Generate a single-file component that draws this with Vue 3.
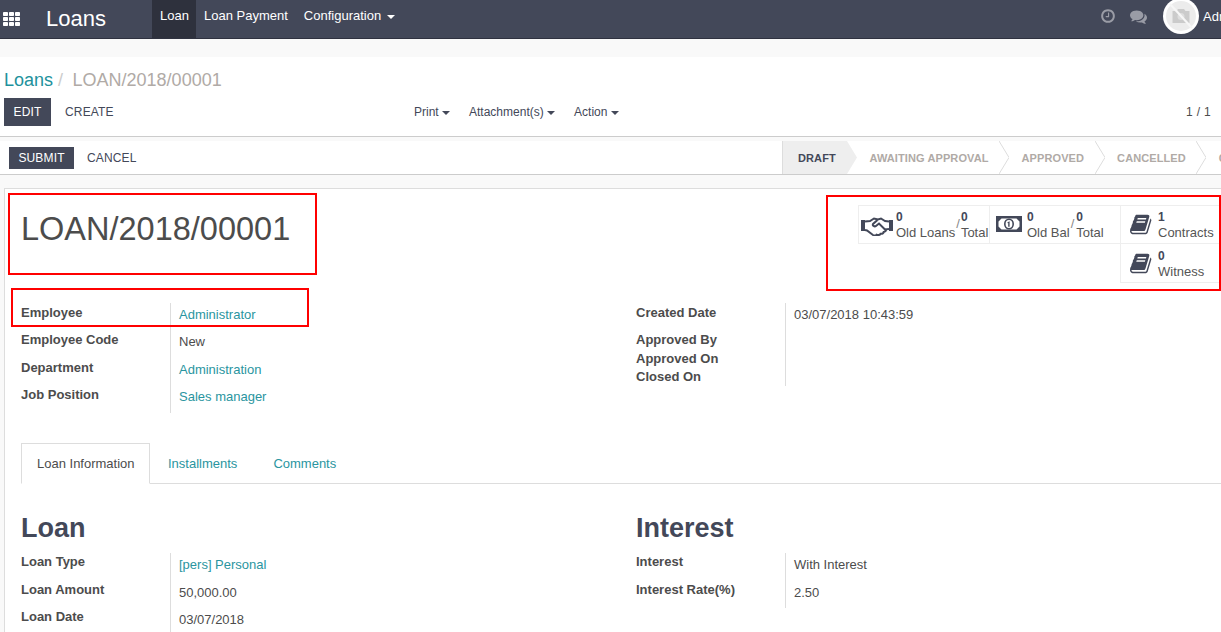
<template>
  <div class="page">
    <header class="navbar">
      <svg class="apps" viewBox="0 0 17 14" width="17" height="14">
        <g fill="#fff">
          <template v-for="row in 3" :key="row">
            <rect v-for="col in 3" :key="col" :x="(col - 1) * 6" :y="(row - 1) * 5" width="5" height="4" rx="0.8" />
          </template>
        </g>
      </svg>
      <div class="brand">Loans</div>
      <nav class="menu">
        <a class="active">Loan</a>
        <a>Loan Payment</a>
        <a>Configuration <span class="caret white"></span></a>
      </nav>
      <div class="systray">
        <svg class="tray-icon" viewBox="0 0 1792 1792" width="16" height="16"><path d="M1024 544v448q0 14-9 23t-23 9h-320q-14 0-23-9t-9-23v-64q0-14 9-23t23-9h224v-352q0-14 9-23t23-9h64q14 0 23 9t9 23zm416 352q0-148-73-273t-198-198-273-73-273 73-198 198-73 273 73 273 198 198 273 73 273-73 198-198 73-273zm224 0q0 209-103 385.500t-279.500 279.500-385.500 103-385.500-103-279.500-279.500-103-385.500 103-385.500 279.500-279.500 385.500-103 385.500 103 279.500 279.500 103 385.500z"/></svg>
        <svg class="tray-icon chat" viewBox="0 0 1792 1792" width="17" height="17"><path d="M1408 768q0 139-94 257t-256.500 186.500-353.500 68.500q-86 0-176-16-124 88-278 128-36 9-86 16h-3q-11 0-20.500-8t-11.500-21q-1-3-1-6.500t.5-6.500 2-6l2.500-5 3.500-5.500 4-5 4.500-5 4-4.500q5-6 23-25t26-29.500 22.500-29 25-38.500 20.500-44q-124-72-195-177t-71-224q0-139 94-257t256.500-186.500 353.500-68.500 353.500 68.500 256.500 186.500 94 257zm384 256q0 120-71 224.500t-195 176.500q10 24 20.500 44t25 38.500 22.500 29 26 29.500 23 25q1 1 4 4.500t4.500 5 4 5 3.500 5.500l2.500 5 2 6 .5 6.500-1 6.500q-3 14-13 22t-22 7q-50-7-86-16-154-40-278-128-90 16-176 16-271 0-472-132 58 4 88 4 161 0 309-45t264-129q125-92 192-212t67-254q0-77-23-152 129 71 204 178t75 230z"/></svg>
        <svg class="avatar" viewBox="0 0 36 36" width="36" height="36">
          <circle cx="18" cy="18" r="18" fill="#fff" />
          <circle cx="18" cy="18" r="15" fill="#ececec" />
          <path fill="#cbcbcb" d="M9.500 13h4l1.500-2h6l1.500 2h4v12h-17z" />
          <circle cx="18" cy="18.500" r="3.500" fill="#dedede" />
          <path d="M7 6 29 30" stroke="#f6f6f6" stroke-width="2.200" />
        </svg>
        <span class="user">Administrator</span>
      </div>
    </header>

    <div class="band"></div>

    <section class="control-panel">
      <div class="breadcrumb">
        <a>Loans</a><span class="sep">/</span><span class="current">LOAN/2018/00001</span>
      </div>
      <div class="cp-row">
        <div class="cp-buttons">
          <button class="btn primary edit">EDIT</button>
          <button class="btn plain">CREATE</button>
        </div>
        <div class="sidebar">
          <a v-for="item in sidebarItems" :key="item">{{ item }} <span class="caret"></span></a>
        </div>
        <div class="pager">1 / 1</div>
      </div>
    </section>

    <section class="statusbar">
      <div class="status-buttons">
        <button class="btn primary small">SUBMIT</button>
        <button class="btn plain small">CANCEL</button>
      </div>
      <div class="states">
        <div v-for="(st, i) in states" :key="st" class="state" :class="{ current: i === 0 }">
          {{ st }}
          <svg class="chev" viewBox="0 0 10 33" width="10" height="33" preserveAspectRatio="none">
            <path d="M0 0 10 16.500 0 33" :fill="i === 0 ? '#eeeeee' : '#fff'" :stroke="i === 0 ? 'none' : '#ddd'" />
          </svg>
        </div>
      </div>
    </section>

    <main class="content">
      <div class="sheet">
        <div class="title-row">
          <h1 class="title">LOAN/2018/00001</h1>
          <div class="button-box">
            <div class="box-row">
              <div class="stat double handshake-cell">
                <svg class="stat-icon wide" viewBox="0 0 32 20" width="32" height="20">
                  <path d="M0 4h4v11H0zM28 4h4v11h-4z" fill="#434859" />
                  <path d="M4 5.500 9 5l4-2.500 4 1 3-1L24 5l4 .5M4 14l2 .5 6 4.500c1.500 1 3 .5 3.500-.3 1.500.8 3.500.3 4-.9 1.500.3 3-.5 3.200-1.800 1.500 0 2.500-1.200 2.300-2.700l3-.3" fill="none" stroke="#434859" stroke-width="2" />
                  <path d="M16.500 4 12 8c-1 1.500 1.500 3 3 2l3-2.500 7 7" fill="none" stroke="#434859" stroke-width="2" />
                </svg>
                <div class="stat-pair">
                  <div class="stat-text"><b>0</b><span>Old Loans</span></div>
                  <i class="slash">/</i>
                  <div class="stat-text"><b>0</b><span>Total</span></div>
                </div>
              </div>
              <div class="stat double money-cell">
                <svg class="stat-icon wide" viewBox="0 0 26 16" width="26" height="16">
                  <path fill-rule="evenodd" fill="#434859" d="M0 0h26v16H0zM5.500 2.500 2.500 5.500v5L5.500 13.500h15l3-3v-5L20.500 2.500z" />
                  <ellipse cx="13" cy="8" rx="4.200" ry="4.800" fill="#fff" stroke="#434859" stroke-width="1.600" />
                  <path d="M11.500 6.300 13.600 5.200V10.800h-1.400V7l-.7.3z" fill="#434859" />
                </svg>
                <div class="stat-pair">
                  <div class="stat-text"><b>0</b><span>Old Bal</span></div>
                  <i class="slash">/</i>
                  <div class="stat-text"><b>0</b><span>Total</span></div>
                </div>
              </div>
              <div class="stat single">
                <svg class="stat-icon" viewBox="0 0 1792 1792" width="23" height="23"><path :d="bookPath" /></svg>
                <div class="stat-text"><b>1</b><span>Contracts</span></div>
              </div>
            </div>
            <div class="box-row end">
              <div class="stat single lower">
                <svg class="stat-icon" viewBox="0 0 1792 1792" width="23" height="23"><path :d="bookPath" /></svg>
                <div class="stat-text"><b>0</b><span>Witness</span></div>
              </div>
            </div>
          </div>
        </div>

        <div class="groups top-groups">
          <div class="field-table">
            <div v-for="f in leftFields" :key="f.label" class="field" :style="{ height: f.h + 'px' }">
              <label>{{ f.label }}</label>
              <div class="value" :class="{ link: f.link }">{{ f.value }}</div>
            </div>
          </div>
          <div class="field-table">
            <div v-for="f in rightFields" :key="f.label" class="field" :style="{ height: f.h + 'px' }">
              <label>{{ f.label }}</label>
              <div class="value">{{ f.value }}</div>
            </div>
          </div>
        </div>

        <div class="tabs">
          <a class="tab active">Loan Information</a>
          <a class="tab">Installments</a>
          <a class="tab">Comments</a>
        </div>

        <div class="groups">
          <div class="col">
            <h2>Loan</h2>
            <div class="field-table">
              <div v-for="f in loanFields" :key="f.label" class="field" :style="{ height: f.h + 'px' }">
                <label>{{ f.label }}</label>
                <div class="value" :class="{ link: f.link }">{{ f.value }}</div>
              </div>
            </div>
          </div>
          <div class="col">
            <h2>Interest</h2>
            <div class="field-table">
              <div v-for="f in interestFields" :key="f.label" class="field" :style="{ height: f.h + 'px' }">
                <label>{{ f.label }}</label>
                <div class="value">{{ f.value }}</div>
              </div>
            </div>
          </div>
        </div>
      </div>
    </main>

    <!-- annotation boxes drawn on top of the screenshot -->
    <div class="mark mark-title"></div>
    <div class="mark mark-employee"></div>
    <div class="mark mark-stats"></div>
  </div>
</template>

<script setup>
const sidebarItems = ['Print', 'Attachment(s)', 'Action']
const states = ['DRAFT', 'AWAITING APPROVAL', 'APPROVED', 'CANCELLED', 'CLOSED']

const bookPath = 'M1639 478q40 57 18 129l-275 906q-19 64-76.500 107.500t-122.500 43.500h-923q-77 0-148.500-53.500t-99.500-131.500q-24-67-2-127 0-4 3-27t4-37q1-8-3-21.500t-3-19.500q2-11 8-21t16.500-23.500 16.500-23.500q23-38 45-91.500t30-91.500q3-10 .5-30t-.5-28q3-11 17-28t17-23q21-36 42-92t25-90q1-9-2.500-32t.5-28q4-13 22-30.500t22-22.500q19-26 42.500-84.500t27.500-96.500q1-8-3-25.500t-2-26.500q2-8 9-18t18-23 17-21q8-12 16.500-30.500t15-35 16-36 19.500-32 26.500-23.500 36-11.500 47.500 5.500l-1 3q38-9 51-9h761q74 0 114 56t18 130l-274 906q-36 119-71.500 153.500t-128.500 34.500h-869q-27 0-38 15-11 16-1 43 24 70 144 70h923q29 0 56-15.500t35-41.500l300-987q7-22 5-57 38 15 59 43zm-1064 2q-4 13 2 22.500t20 9.500h608q13 0 25.500-9.500t16.500-22.500l21-64q4-13-2-22.500t-20-9.500h-608q-13 0-25.500 9.500t-16.500 22.500zm-83 256q-4 13 2 22.500t20 9.500h608q13 0 25.500-9.500t16.500-22.500l21-64q4-13-2-22.500t-20-9.500h-608q-13 0-25.500 9.500t-16.500 22.500z'

const leftFields = [
  { label: 'Employee', value: 'Administrator', link: true, h: 27 },
  { label: 'Employee Code', value: 'New', h: 28 },
  { label: 'Department', value: 'Administration', link: true, h: 27 },
  { label: 'Job Position', value: 'Sales manager', link: true, h: 28 }
]
const rightFields = [
  { label: 'Created Date', value: '03/07/2018 10:43:59', h: 27 },
  { label: 'Approved By', value: '', h: 19 },
  { label: 'Approved On', value: '', h: 18 },
  { label: 'Closed On', value: '', h: 19 }
]
const loanFields = [
  { label: 'Loan Type', value: '[pers] Personal', link: true, h: 28 },
  { label: 'Loan Amount', value: '50,000.00', h: 27 },
  { label: 'Loan Date', value: '03/07/2018', h: 28 }
]
const interestFields = [
  { label: 'Interest', value: 'With Interest', h: 28 },
  { label: 'Interest Rate(%)', value: '2.50', h: 27 }
]
</script>

<style scoped>
.page {
  position: relative;
  width: 1221px;
  height: 632px;
  overflow: hidden;
  background: #f9f9f9;
  font-family: "Liberation Sans", Arial, sans-serif;
  font-size: 13px;
  color: #4c4c4c;
}

.navbar {
  display: flex;
  align-items: center;
  width: 1300px;
  height: 38px;
  background: #434859;
  border-bottom: 1px solid #2f3240;
  color: #fff;
}

.apps {
  margin: 0 0 0 3px;
  flex: none;
}

.brand {
  width: 132px;
  padding-left: 26px;
  box-sizing: border-box;
  font-size: 22px;
  line-height: 30px;
}

.menu {
  display: flex;
  height: 38px;
}

.menu a {
  padding: 0 8px;
  line-height: 31px;
  font-size: 13px;
}

.menu a.active {
  width: 44px;
  box-sizing: border-box;
  background: #2e313d;
}

.caret {
  display: inline-block;
  width: 0;
  height: 0;
  margin-left: 2px;
  vertical-align: middle;
  border-top: 4px solid #4c4c4c;
  border-left: 4px solid transparent;
  border-right: 4px solid transparent;
}

.caret.white {
  border-top-color: #fff;
}

.systray {
  display: flex;
  align-items: center;
  position: absolute;
  left: 1100px;
  top: 0;
  height: 38px;
}

.tray-icon {
  fill: #9a9ca6;
  margin-top: -6px;
}

.tray-icon.chat {
  margin-left: 14px;
}

.avatar {
  margin: -6px 0 0 16px;
  flex: none;
}

.user {
  margin: -6px 0 0 4px;
  font-size: 13px;
}

.band {
  height: 18px;
}

.control-panel {
  height: 79px;
  background: #fff;
  border-bottom: 1px solid #ccc;
  padding: 0 0 0 4px;
}

.breadcrumb {
  height: 41px;
  padding-top: 11px;
  box-sizing: border-box;
  font-size: 18px;
  line-height: 24px;
}

.breadcrumb a {
  color: #21919c;
}

.sep {
  color: #ccc;
  margin: 0 9.500px 0 5px;
}

.current {
  color: #b0aaa6;
}

.cp-row {
  display: flex;
  align-items: flex-start;
}

.cp-buttons {
  display: flex;
  width: 410px;
}

.btn {
  border: 0;
  background: none;
  padding: 0;
  font: inherit;
  font-size: 12px;
  letter-spacing: 0.15px;
  color: #434859;
}

.btn.primary {
  background: #434859;
  color: #fff;
}

.btn.edit {
  width: 47px;
  height: 28px;
}

.btn.plain {
  padding: 0 14px;
  height: 28px;
}

.btn.small {
  height: 22px;
}

.btn.primary.small {
  width: 65px;
}

.btn.plain.small {
  padding: 0 13px;
}

.sidebar {
  display: flex;
  gap: 19px;
  width: 772px;
  font-size: 12px;
  line-height: 28px;
  color: #434859;
}

.sidebar .caret {
  margin-left: 0;
  border-top-color: #434859;
  border-left-width: 4.500px;
  border-right-width: 4.500px;
}

.pager {
  font-size: 12px;
  line-height: 28px;
  word-spacing: 0.7px;
  color: #4c4c4c;
}

.statusbar {
  display: flex;
  align-items: center;
  width: 1400px;
  height: 33px;
  margin-top: 4px;
  background: #fff;
  border-bottom: 1px solid #ccc;
}

.status-buttons {
  display: flex;
  width: 782px;
  padding-left: 9px;
  box-sizing: border-box;
}

.states {
  display: flex;
  height: 33px;
}

.state {
  position: relative;
  display: flex;
  align-items: center;
  padding: 0 10.500px 0 22.500px;
  font-size: 11px;
  font-weight: bold;
  letter-spacing: 0.1px;
  color: #b0aaa6;
  white-space: nowrap;
}

.state.current {
  padding: 0 0 0 15px;
  width: 65px;
  box-sizing: border-box;
  background: #eee;
  color: #434859;
  border-left: 1px solid #ddd;
}

.chev {
  position: absolute;
  top: 0;
  left: 100%;
  z-index: 1;
}

.content {
  padding: 13px 0 0 4px;
}

.sheet {
  width: 1400px;
  height: 460px;
  padding: 0 0 0 16px;
  box-sizing: border-box;
  background: #fff;
  border: 1px solid #ddd;
}

.title-row {
  display: flex;
  height: 114px;
}

.title {
  width: 838px;
  margin: 0;
  padding-top: 20px;
  box-sizing: border-box;
  font-size: 32.500px;
  line-height: 40px;
  font-weight: normal;
  color: #4c4c4c;
}

.button-box {
  padding-top: 16px;
}

.box-row {
  display: flex;
}

.box-row.end {
  justify-content: flex-end;
}

.stat {
  display: flex;
  align-items: flex-start;
  height: 39px;
  border: 1px solid #eee;
  box-sizing: border-box;
  margin-left: -1px;
  font-size: 13px;
}

.handshake-cell {
  width: 132px;
  padding-left: 2px;
}

.money-cell {
  width: 132px;
  padding-left: 6px;
}

.single {
  width: 100px;
  padding-left: 9px;
}

.lower {
  padding-top: 1px;
  border-top: 0;
}

.stat-icon {
  fill: #434859;
  flex: none;
  margin: 7px 5px 0 0;
}

.stat-icon.wide {
  margin-top: 10px;
}

.handshake-cell .stat-icon {
  margin-right: 3px;
}

.stat-pair {
  display: flex;
}

.stat-text {
  display: flex;
  flex-direction: column;
  padding-top: 3px;
  line-height: 16px;
  white-space: nowrap;
}

.stat-text b {
  font-size: 12px;
  color: #434859;
}

.stat-text span {
  color: #555;
}

.slash {
  font-style: normal;
  color: #888;
  padding: 10px 1px 0 1px;
  line-height: 16px;
}

.money-cell .slash {
  padding-right: 2px;
}

.groups {
  display: flex;
}

.groups > * {
  width: 615px;
  flex: none;
}

.field-table {
  display: flex;
  flex-direction: column;
}

.field {
  display: flex;
}

.field label {
  width: 149px;
  flex: none;
  font-weight: bold;
  line-height: 18px;
}

.top-groups label {
  padding-top: 1px;
  box-sizing: border-box;
}

.field .value {
  padding: 3px 0 0 8px;
  line-height: 18px;
  color: #4c4c4c;
  border-left: 1px solid #ddd;
  flex: 1;
}

.field .value.link {
  color: #2a95a0;
}

.top-groups {
  height: 140px;
}

.tabs {
  display: flex;
  height: 40px;
  border-bottom: 1px solid #ddd;
}

.tab {
  padding: 0 18px;
  line-height: 41px;
  color: #2a95a0;
  height: 40px;
  box-sizing: border-box;
}

.tab.active {
  width: 129px;
  padding: 0 0 0 15px;
  line-height: 39px;
  color: #4c4c4c;
  background: #fff;
  border: 1px solid #ddd;
  border-bottom: 1px solid #fff;
  height: 41px;
  white-space: nowrap;
}

.col h2 {
  margin: 0;
  padding-top: 29px;
  height: 69px;
  box-sizing: border-box;
  font-size: 27px;
  line-height: 30px;
  font-weight: bold;
  color: #434859;
}

.mark {
  position: absolute;
  border: 2px solid #f00;
  box-sizing: border-box;
  pointer-events: none;
}

.mark-title {
  left: 8px;
  top: 193px;
  width: 309px;
  height: 82px;
}

.mark-employee {
  left: 11px;
  top: 288px;
  width: 298px;
  height: 39px;
}

.mark-stats {
  left: 826px;
  top: 195px;
  width: 395px;
  height: 96px;
}
</style>
